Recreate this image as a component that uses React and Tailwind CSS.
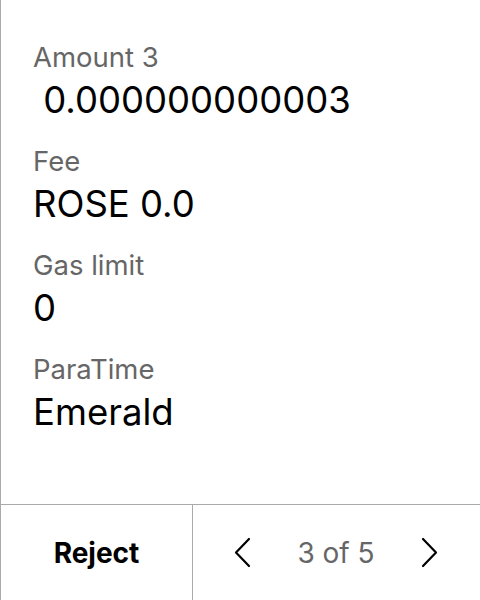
const fields = [
  { label: "Amount 3", value: "\u00a00.000000000003" },
  { label: "Fee", value: "ROSE 0.0" },
  { label: "Gas limit", value: "0" },
  { label: "ParaTime", value: "Emerald" },
];

function Chevron({ dir }) {
  const d = dir === "left" ? "M16 2 L3 15.5 L16 29" : "M3 2 L16 15.5 L3 29";
  return (
    <svg width="19" height="31" viewBox="0 0 19 31" fill="none">
      <path d={d} stroke="#000" strokeWidth="2.2" strokeLinecap="round" strokeLinejoin="round" />
    </svg>
  );
}

export default function App() {
  return (
    <div
      className="w-[480px] h-[600px] bg-white border-l border-[#aaaaaa] flex flex-col"
      style={{ fontFamily: "Inter, 'Noto Sans', sans-serif" }}
    >
      <div className="flex-1 pl-8 pt-[40px] flex flex-col gap-[22px]">
        {fields.map((f) => (
          <div key={f.label} className="flex flex-col">
            <span className="text-[27.5px] leading-[34px] text-[#666666]">{f.label}</span>
            <span className="mt-1 text-[36.5px] leading-[44px] text-black">{f.value}</span>
          </div>
        ))}
      </div>
      <div className="h-[96px] border-t border-[#aaaaaa] flex">
        <button className="w-[192px] border-r border-[#aaaaaa] flex items-center justify-center text-[28px] font-bold text-black">
          Reject
        </button>
        <div className="flex-1 flex items-center justify-between pl-[40px] pr-[41px]">
          <Chevron dir="left" />
          <span className="text-[28px] text-[#666666]">3 of 5</span>
          <Chevron dir="right" />
        </div>
      </div>
    </div>
  );
}
